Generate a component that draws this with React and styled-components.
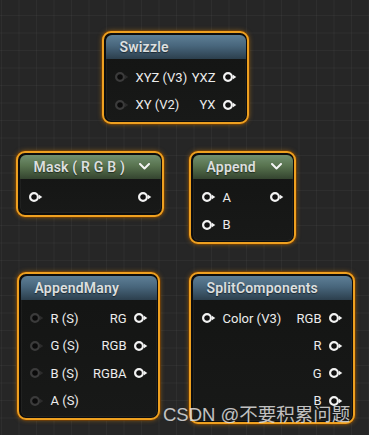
import React from "react";
import styled, { createGlobalStyle } from "styled-components";

const Global = createGlobalStyle`
  html, body {
    margin: 0;
    padding: 0;
    background: #262626;
  }
`;

const Canvas = styled.div`
  position: relative;
  width: 369px;
  height: 435px;
  overflow: hidden;
  background-color: #262626;
  background-image:
    linear-gradient(to right, rgba(255, 255, 255, 0.035) 1px, transparent 1px),
    linear-gradient(to bottom, rgba(255, 255, 255, 0.035) 1px, transparent 1px);
  background-size: 17.5px 17.5px;
  background-position: 1px 15px;
  font-family: Roboto, "Liberation Sans", sans-serif;
`;

const NodeFrame = styled.div`
  position: absolute;
  left: ${(p) => p.x}px;
  top: ${(p) => p.y}px;
  width: ${(p) => p.w}px;
  box-sizing: border-box;
  border: 2.5px solid #eea020;
  border-radius: 9px;
  padding: 1.5px;
  background: #0d0d0d;
  box-shadow: 0 0 0 1px rgba(110, 60, 5, 0.8), 0 0 5px rgba(240, 150, 20, 0.5);
`;

const NodeInner = styled.div`
  border-radius: 6px;
  overflow: hidden;
  background: linear-gradient(180deg, #131413 0%, #181918 100%);
  box-shadow: inset 0 0 0 1px rgba(255, 255, 255, 0.04);
  padding-bottom: ${(p) => (p.pb === undefined ? 2 : p.pb)}px;
`;

const Header = styled.div`
  height: 24px;
  display: flex;
  align-items: center;
  justify-content: space-between;
  padding: 0 11px 0 14px;
  background: ${(p) =>
    p.tone === "green"
      ? "linear-gradient(180deg, #729070 0%, #58734f 45%, #34442f 100%)"
      : "linear-gradient(180deg, #5e7f96 0%, #48667c 45%, #2c3f4d 100%)"};
  color: #dcdfdf;
  font-size: 14px;
  font-weight: 600;
  letter-spacing: 0.2px;
  text-shadow: 0 1px 1px rgba(0, 0, 0, 0.5);
`;

const Body = styled.div`
  padding-top: 5px;
`;

const Row = styled.div`
  height: 27.5px;
  display: flex;
  align-items: center;
  justify-content: space-between;
  padding: 0 9px;
`;

const Side = styled.div`
  display: flex;
  align-items: center;
  gap: 7px;
  color: #ececec;
  font-size: 13px;
  white-space: nowrap;
`;

const Watermark = styled.div`
  position: absolute;
  left: 163px;
  top: 406px;
  font-family: "Liberation Sans", "Noto Sans CJK SC", sans-serif;
  font-size: 18.5px;
  line-height: 1;
  color: rgba(225, 225, 225, 0.85);
  white-space: nowrap;
`;

const Pin = ({ on }) => (
  <svg width="14" height="10" viewBox="0 0 14 10" style={{ display: "block" }}>
    <circle
      cx="5"
      cy="5"
      r="3.9"
      fill={on ? "#101010" : "#0b0b0b"}
      stroke={on ? "#f2f2f2" : "#3b3b3b"}
      strokeWidth="2.2"
    />
    <polygon points="10,2.8 13.3,5 10,7.2" fill={on ? "#f2f2f2" : "#2c2c2c"} />
  </svg>
);

const Chevron = () => (
  <svg width="11" height="7" viewBox="0 0 11 7">
    <polyline
      points="1,1 5.5,5.5 10,1"
      fill="none"
      stroke="#f4f4f4"
      strokeWidth="2"
      strokeLinecap="round"
      strokeLinejoin="round"
    />
  </svg>
);

const Node = ({ x, y, w, title, tone, menu, rows, pb }) => (
  <NodeFrame x={x} y={y} w={w}>
    <NodeInner pb={pb}>
      <Header tone={tone}>
        <span>{title}</span>
        {menu && <Chevron />}
      </Header>
      <Body>
        {rows.map((r, i) => (
          <Row key={i}>
            <Side>
              {r.in !== undefined && (
                <>
                  <Pin on={r.inOn} />
                  {r.in && <span>{r.in}</span>}
                </>
              )}
            </Side>
            <Side>
              {r.out !== undefined && (
                <>
                  {r.out && <span>{r.out}</span>}
                  <Pin on />
                </>
              )}
            </Side>
          </Row>
        ))}
      </Body>
    </NodeInner>
  </NodeFrame>
);

export default function App() {
  return (
    <>
      <Global />
      <Canvas>
        <Node
          x={102}
          y={31}
          w={147}
          title="Swizzle"
          rows={[
            { in: "XYZ (V3)", out: "YXZ" },
            { in: "XY (V2)", out: "YX" },
          ]}
        />
        <Node
          x={16}
          y={151}
          w={148}
          title="Mask ( R G B )"
          tone="green"
          menu
          rows={[{ in: "", inOn: true, out: "" }]}
        />
        <Node
          x={189}
          y={151}
          w={107}
          title="Append"
          tone="green"
          menu
          rows={[
            { in: "A", inOn: true, out: "" },
            { in: "B", inOn: true },
          ]}
        />
        <Node
          x={17}
          y={272}
          w={143}
          title="AppendMany"
          rows={[
            { in: "R (S)", out: "RG" },
            { in: "G (S)", out: "RGB" },
            { in: "B (S)", out: "RGBA" },
            { in: "A (S)" },
          ]}
        />
        <Node
          x={189}
          y={272}
          w={166}
          title="SplitComponents"
          pb={6}
          rows={[
            { in: "Color (V3)", inOn: true, out: "RGB" },
            { out: "R" },
            { out: "G" },
            { out: "B" },
          ]}
        />
        <Watermark>CSDN @不要积累问题</Watermark>
      </Canvas>
    </>
  );
}
